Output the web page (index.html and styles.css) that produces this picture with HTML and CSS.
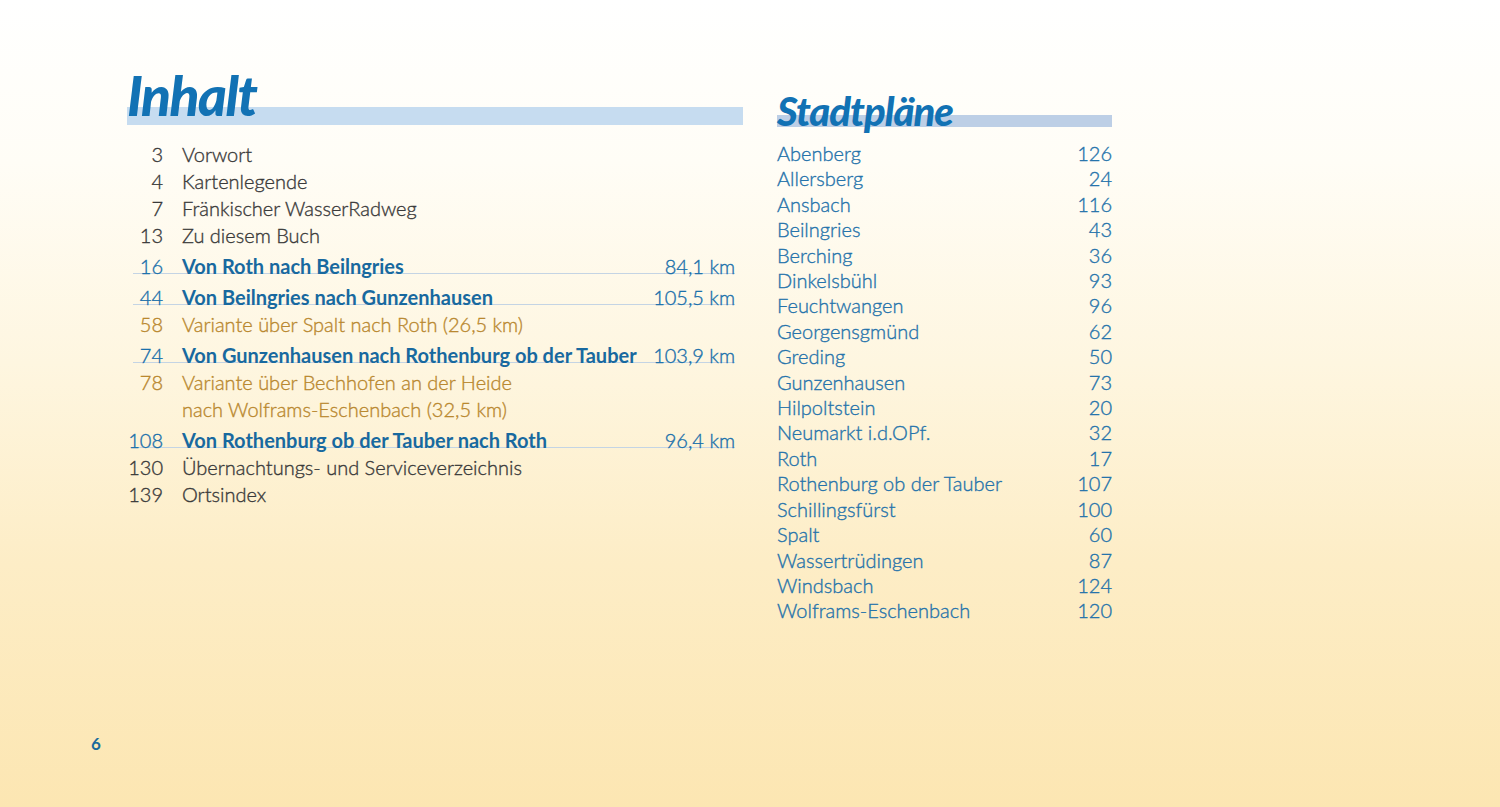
FILE: index.html
```html
<!DOCTYPE html>
<html lang="de">
<head>
<meta charset="utf-8">
<title>Inhalt</title>
<link rel="stylesheet" href="styles.css">
</head>
<body>
<div class="page">
  <div class="spread">
    <section class="toc">
      <h1 class="title title-main"><span>Inhalt</span></h1>
      <ul class="entries">
        <li class="row"><span class="num">3</span><span class="label">Vorwort</span></li>
        <li class="row"><span class="num">4</span><span class="label">Kartenlegende</span></li>
        <li class="row"><span class="num">7</span><span class="label">Fränkischer WasserRadweg</span></li>
        <li class="row"><span class="num">13</span><span class="label">Zu diesem Buch</span></li>
        <li class="row tour"><span class="num">16</span><span class="label">Von Roth nach Beilngries</span><span class="km">84,1 km</span></li>
        <li class="row tour"><span class="num">44</span><span class="label">Von Beilngries nach Gunzenhausen</span><span class="km">105,5 km</span></li>
        <li class="row variant"><span class="num">58</span><span class="label">Variante über Spalt nach Roth (26,5 km)</span></li>
        <li class="row tour"><span class="num">74</span><span class="label">Von Gunzenhausen nach Rothenburg ob der Tauber</span><span class="km">103,9 km</span></li>
        <li class="row variant"><span class="num">78</span><span class="label">Variante über Bechhofen an der Heide<br>nach Wolframs-Eschenbach (32,5 km)</span></li>
        <li class="row tour"><span class="num">108</span><span class="label">Von Rothenburg ob der Tauber nach Roth</span><span class="km">96,4 km</span></li>
        <li class="row"><span class="num">130</span><span class="label">Übernachtungs- und Serviceverzeichnis</span></li>
        <li class="row"><span class="num">139</span><span class="label">Ortsindex</span></li>
      </ul>
    </section>
    <section class="maps">
      <h2 class="title title-sub"><span>Stadtpläne</span></h2>
      <ul class="towns">
        <li class="town"><span>Abenberg</span><span>126</span></li>
        <li class="town"><span>Allersberg</span><span>24</span></li>
        <li class="town"><span>Ansbach</span><span>116</span></li>
        <li class="town"><span>Beilngries</span><span>43</span></li>
        <li class="town"><span>Berching</span><span>36</span></li>
        <li class="town"><span>Dinkelsbühl</span><span>93</span></li>
        <li class="town"><span>Feuchtwangen</span><span>96</span></li>
        <li class="town"><span>Georgensgmünd</span><span>62</span></li>
        <li class="town"><span>Greding</span><span>50</span></li>
        <li class="town"><span>Gunzenhausen</span><span>73</span></li>
        <li class="town"><span>Hilpoltstein</span><span>20</span></li>
        <li class="town"><span>Neumarkt i.d.OPf.</span><span>32</span></li>
        <li class="town"><span>Roth</span><span>17</span></li>
        <li class="town"><span>Rothenburg ob der Tauber</span><span>107</span></li>
        <li class="town"><span>Schillingsfürst</span><span>100</span></li>
        <li class="town"><span>Spalt</span><span>60</span></li>
        <li class="town"><span>Wassertrüdingen</span><span>87</span></li>
        <li class="town"><span>Windsbach</span><span>124</span></li>
        <li class="town"><span>Wolframs-Eschenbach</span><span>120</span></li>
      </ul>
    </section>
  </div>
  <div class="folio">6</div>
</div>
</body>
</html>
```
FILE: styles.css
```css
html, body {
  margin: 0;
  padding: 0;
}
body {
  font-family: Lato, "Liberation Sans", sans-serif;
  font-weight: 300;
  color: #3a3a3a;
}
.page {
  width: 1500px;
  height: 807px;
  box-sizing: border-box;
  padding: 60px 0 0 0;
  background: linear-gradient(to bottom, #ffffff 0%, #fffdf6 20%, #fef6e0 45%, #fdedc6 70%, #fce6b2 100%);
  position: relative;
}
.spread {
  display: flex;
  align-items: flex-start;
  gap: 34px;
  padding-left: 127px;
}
.toc {
  width: 616px;
}
.maps {
  width: 335px;
  padding-top: 20px;
}
.title {
  margin: 0;
  font-weight: 900;
  font-style: italic;
  color: #1272b4;
  letter-spacing: -1.5px;
  display: flex;
  align-items: flex-end;
}
.title-main {
  height: 66px;
  font-size: 55px;
  line-height: 1;
  background: linear-gradient(to bottom, transparent 47px, #c6dcf0 47px, #c6dcf0 65px, transparent 65px);
}
.title-main span {
  margin-bottom: 3px;
}
.title-sub {
  height: 47px;
  font-size: 40px;
  line-height: 1;
  letter-spacing: -1px;
  background: linear-gradient(to bottom, transparent 35px, #bdcfe6 35px);
}
.title-sub span {
  margin-bottom: -4px;
}
.entries, .towns {
  list-style: none;
  margin: 0;
  padding: 0;
}
.entries {
  margin-top: 15px;
  padding-right: 8px;
}
.row, .town {
  -webkit-text-stroke: 0.35px currentColor;
}
.row {
  display: flex;
  align-items: baseline;
  font-size: 20px;
  line-height: 27px;
}
.num {
  width: 36px;
  flex: none;
  text-align: right;
  margin-right: 19px;
}
.label {
  flex: 1;
}
.km {
  flex: none;
  color: #1a70ab;
}
.tour {
  color: #1a70ab;
  margin-top: 4px;
  background: linear-gradient(to bottom, transparent 20px, #c4d4e4 20px, #c4d4e4 21px, transparent 21px) no-repeat;
  background-position: 6px 0;
  background-size: calc(100% - 6px) 100%;
}
.tour .label {
  font-weight: 700;
  color: #18699f;
  -webkit-text-stroke: 0;
}
.variant {
  color: #b9882f;
}
.towns {
  margin-top: 14px;
}
.town {
  display: flex;
  justify-content: space-between;
  font-size: 20px;
  line-height: 25.4px;
  color: #2573ab;
}
.folio {
  position: absolute;
  left: 91px;
  top: 733px;
  font-size: 17px;
  font-weight: 700;
  color: #1a6a9c;
}
```
